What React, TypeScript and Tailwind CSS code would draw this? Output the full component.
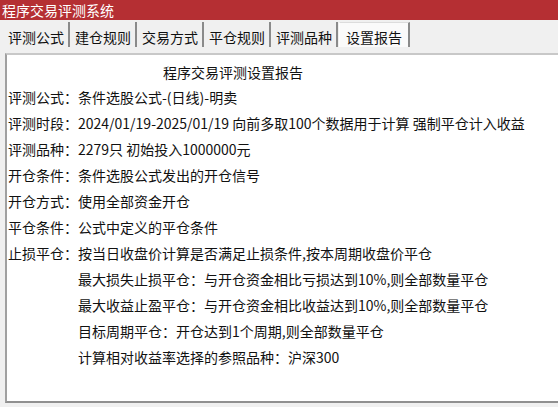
import React from 'react';

const tabs = ['评测公式', '建仓规则', '交易方式', '平仓规则', '评测品种', '设置报告'];

const rows: { label?: string; text: string; indent?: boolean }[] = [
  { label: '评测公式：', text: '条件选股公式-(日线)-明卖' },
  { label: '评测时段：', text: '2024/01/19-2025/01/19 向前多取100个数据用于计算 强制平仓计入收益' },
  { label: '评测品种：', text: '2279只 初始投入1000000元' },
  { label: '开仓条件：', text: '条件选股公式发出的开仓信号' },
  { label: '开仓方式：', text: '使用全部资金开仓' },
  { label: '平仓条件：', text: '公式中定义的平仓条件' },
  { label: '止损平仓：', text: '按当日收盘价计算是否满足止损条件,按本周期收盘价平仓' },
  { indent: true, text: '最大损失止损平仓：与开仓资金相比亏损达到10%,则全部数量平仓' },
  { indent: true, text: '最大收益止盈平仓：与开仓资金相比收益达到10%,则全部数量平仓' },
  { indent: true, text: '目标周期平仓：开仓达到1个周期,则全部数量平仓' },
  { indent: true, text: '计算相对收益率选择的参照品种：沪深300' },
];

export default function App() {
  const font = { fontFamily: '"Noto Sans CJK SC", "Noto Sans", sans-serif' };
  return (
    <div className="w-[558px] h-[407px] bg-[#f0f0f0] overflow-hidden flex flex-col text-[14px] text-[#111]" style={font}>
      <div className="h-[20px] bg-[#b52f33] text-white flex items-center px-[2px] leading-none">程序交易评测系统</div>

      <div className="flex items-end h-[27px] pl-[4px] pt-[2px]">
        {tabs.map((t, i) => {
          const active = i === tabs.length - 1;
          return (
            <div
              key={t}
              className={`h-full flex items-center border-r-2 border-r-[#8a8a8a] leading-none ${
                active ? 'bg-[#fafafa] border-l border-l-white border-t border-t-[#dcdcdc] px-[6px] -mt-[2px]' : 'h-[23px] px-[4px] mr-[1px]'
              }`}
            >
              <span className="pt-[4px]">{t}</span>
            </div>
          );
        })}
      </div>

      <div className="ml-[5px] mt-[6px] h-[350px] bg-white border-l-2 border-l-[#a0a0a0] border-t-2 border-t-[#c8c8c8] border-b-2 border-b-[#909090] pl-[1px]">
        <div className="w-[450px] text-center leading-none pt-[10px]">程序交易评测设置报告</div>
        <div className="flex flex-col pt-[10px] gap-[9px] leading-[17px]">
          {rows.map((r, i) => (
            <div key={i} className={`whitespace-nowrap ${r.indent ? 'pl-[70px]' : ''}`}>
              {r.label}
              {r.text}
            </div>
          ))}
        </div>
      </div>
    </div>
  );
}
